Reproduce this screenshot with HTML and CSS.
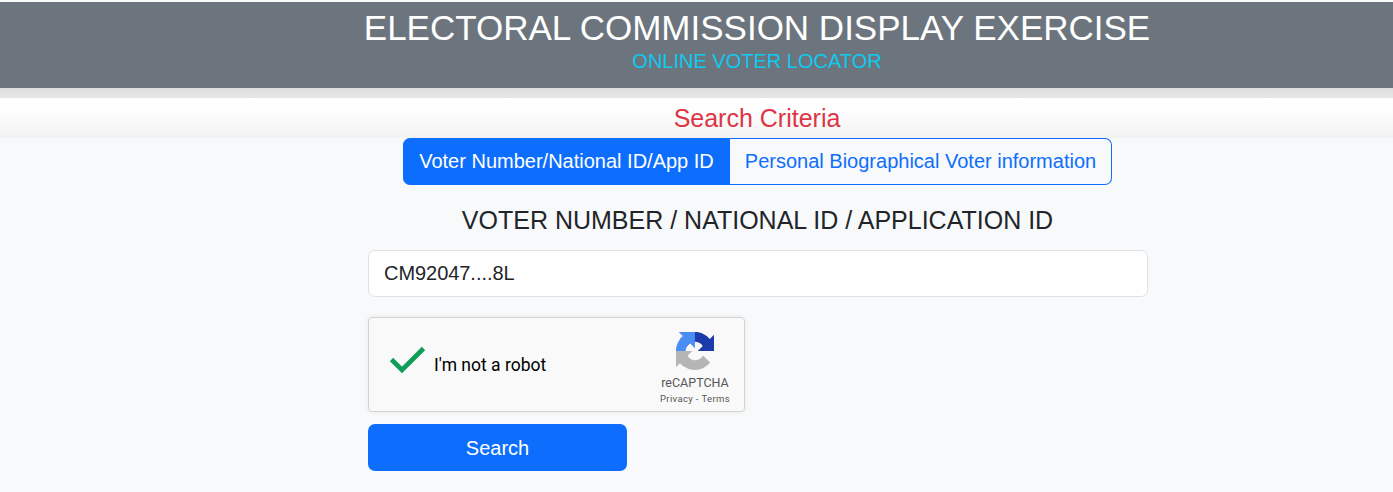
FILE: index.html
```html
<!DOCTYPE html>
<html lang="en">
<head>
<meta charset="utf-8">
<title>Online Voter Locator</title>
<link rel="stylesheet" href="styles.css">
</head>
<body>
<header class="banner">
  <div class="column">
    <h1 class="title">ELECTORAL COMMISSION DISPLAY EXERCISE</h1>
    <p class="subtitle">ONLINE VOTER LOCATOR</p>
  </div>
</header>
<div class="divider"></div>
<div class="criteria"><h2 class="column criteria-title">Search Criteria</h2></div>
<main class="column">
  <nav class="tabs">
    <a class="tab tab-active"><span class="tab-text">Voter Number/National ID/App ID</span></a>
    <a class="tab"><span class="tab-text">Personal Biographical Voter information</span></a>
  </nav>
  <h3 class="field-title">VOTER NUMBER / NATIONAL ID / APPLICATION ID</h3>
  <div class="field"><span class="field-value">CM92047....8L</span></div>
  <section class="captcha">
    <svg class="check" viewBox="0 0 38 30"><path d="M3.5 14.5 L14 25 L35.5 3.5" fill="none" stroke="#0f9d58" stroke-width="4.6"/></svg>
    <span class="captcha-label">I'm not a robot</span>
    <div class="brand">
      <svg class="logo" viewBox="0 0 64 64">
        <path d="M64 31.955a33.4 33.4 0 0 0-.02-1.37V4.687l-7.16 7.16C50.96 4.674 42.05.1 32.068.1 21.68.1 12.45 5.055 6.616 12.73l11.736 11.86a15.55 15.55 0 0 1 4.754-5.334c2.05-1.6 4.952-2.906 8.962-2.906.484 0 .858.057 1.133.163 4.968.392 9.27 3.133 11.803 7.11l-8.307 8.307L64 31.955" fill="#1c3aa9"/>
        <path d="M31.862.094a33.4 33.4 0 0 0-1.37.02H4.594l7.16 7.16C4.58 13.147.006 22.048.006 32.026c0 10.388 4.955 19.618 12.63 25.45l11.86-11.736a15.55 15.55 0 0 1-5.334-4.754c-1.6-2.05-2.906-4.952-2.906-8.962 0-.484.057-.858.163-1.133.392-4.968 3.133-9.27 7.11-11.803l8.307 8.307L31.862.094" fill="#4a8df5"/>
        <path d="M.001 32.045a33.4 33.4 0 0 0 .02 1.37v25.898l7.16-7.16c5.873 7.173 14.774 11.747 24.752 11.747 10.388 0 19.618-4.955 25.45-12.63l-11.736-11.86a15.55 15.55 0 0 1-4.754 5.334c-2.05 1.6-4.952 2.906-8.962 2.906-.484 0-.858-.057-1.133-.163-4.968-.392-9.27-3.133-11.803-7.11l8.307-8.307L.001 32.045" fill="#b5b5b5"/>
      </svg>
      <span class="brand-name">reCAPTCHA</span>
      <span class="brand-links">Privacy&nbsp;-&nbsp;Terms</span>
    </div>
  </section>
  <button class="search">Search</button>
</main>
</body>
</html>
```
FILE: styles.css
```css
* { box-sizing: border-box; }
body {
  margin: 0;
  padding-top: 2px;
  background: #f8f9fb;
  color: #212529;
  font-family: "Liberation Sans", Arial, sans-serif;
  font-size: 20px;
  height: 492px;
  overflow: hidden;
}
h1, h2, h3, p { margin: 0; font-weight: 400; white-space: nowrap; }
.column { width: 780px; margin-left: 368px; text-align: center; }
.banner { height: 86px; background: #6c757d; padding-top: 5px; }
.banner .column, .criteria-title { margin-left: 367px; }
.title {
  display: flex;
  justify-content: center;
  color: #fff;
  font-size: 35px;
  line-height: 42px;
}
.subtitle { color: #0dcaf0; font-size: 20px; line-height: 24px; }
.divider { height: 10px; background: linear-gradient(#dedede, #e7e7e7); }
.criteria { height: 40px; background: linear-gradient(#fff, #fcfcfc 45%, #f2f2f2); }
.criteria-title { color: #dc3545; font-size: 25px; line-height: 41px; }
.tabs { display: flex; width: 709px; height: 47px; margin-left: 35px; }
.tab {
  display: flex;
  align-items: center;
  justify-content: center;
  width: 382px;
  border: 1px solid #0d6efd;
  border-left: 0;
  border-radius: 0 7px 7px 0;
  color: #0d6efd;
  white-space: nowrap;
}
.tab-active {
  width: 327px;
  padding-left: 1px;
  border-radius: 7px 0 0 7px;
  background: #0d6efd;
  color: #fff;
}
.field-title { margin-top: 20px; padding-right: 1px; font-size: 25px; line-height: 30px; }
.field {
  display: flex;
  align-items: center;
  height: 47px;
  margin-top: 15px;
  padding: 0 15px;
  border: 1px solid #dee2e6;
  border-radius: 7px;
  background: #fff;
}
.field-value { letter-spacing: -.05px; }
.captcha {
  display: flex;
  align-items: center;
  width: 377px;
  height: 95px;
  margin-top: 20px;
  padding-left: 19px;
  border: 1px solid #d3d3d3;
  border-radius: 4px;
  background: #f9f9f9;
  box-shadow: 0 0 5px rgba(0, 0, 0, .08);
  font-family: Roboto, sans-serif;
}
.check { width: 38px; height: 30px; margin-bottom: 10px; }
.captcha-label { margin-left: 8px; color: #000; font-size: 17.5px; }
.brand {
  display: flex;
  flex-direction: column;
  align-items: center;
  width: 90px;
  height: 93px;
  margin-left: auto;
  margin-right: 4px;
  padding-top: 14px;
  color: #555;
}
.logo { width: 38px; height: 38px; }
.brand-name { margin-top: 5px; font-size: 12.5px; line-height: 16px; }
.brand-links { font-size: 9.5px; line-height: 15px; letter-spacing: .35px; }
.search {
  display: block;
  width: 259px;
  height: 47px;
  margin-top: 12px;
  padding: 2px 0 0;
  border: 0;
  border-radius: 7px;
  background: #0d6efd;
  color: #fff;
  font: inherit;
}
```
